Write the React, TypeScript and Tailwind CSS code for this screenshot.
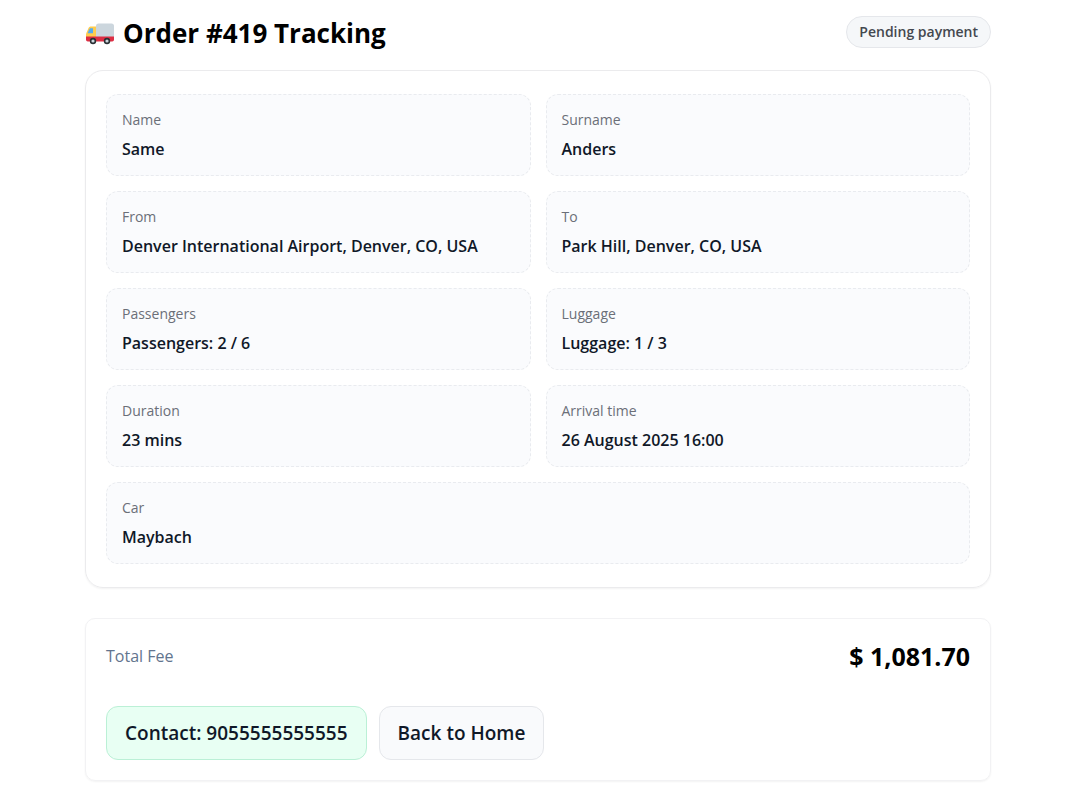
type Field = { label: string; value: string; wide?: boolean }

const FIELDS: Field[] = [
  { label: 'Name', value: 'Same' },
  { label: 'Surname', value: 'Anders' },
  { label: 'From', value: 'Denver International Airport, Denver, CO, USA' },
  { label: 'To', value: 'Park Hill, Denver, CO, USA' },
  { label: 'Passengers', value: 'Passengers: 2 / 6' },
  { label: 'Luggage', value: 'Luggage: 1 / 3' },
  { label: 'Duration', value: '23 mins' },
  { label: 'Arrival time', value: '26 August 2025 16:00' },
  { label: 'Car', value: 'Maybach', wide: true },
]

function TruckIcon() {
  return (
    <svg className="h-6 w-[29px] shrink-0" viewBox="-1 -2 29 24" aria-hidden="true">
      <path d="M12.500.5h13A2.500 2.500 0 0 1 28 3v11H10V3A2.500 2.500 0 0 1 12.500.5z" fill="#ccd6dd" />
      <path d="M10 3.500H5.200c-1.400 0-2.300.6-2.900 1.900L.3 10.200C.1 10.800 0 11.300 0 12v4h10z" fill="#ffcc4d" />
      <path d="M7 5.200H4.800c-.8 0-1.200.4-1.500 1.100L1.600 10.200H7z" fill="#55acee" />
      <path d="M0 13.500h28v3.200a1.800 1.800 0 0 1-1.800 1.800H1.800A1.800 1.800 0 0 1 0 16.700z" fill="#dd2e44" />
      <circle cx="7" cy="18" r="3.200" fill="#292f33" />
      <circle cx="7" cy="18" r="1.600" fill="#ccd6dd" />
      <circle cx="21" cy="18" r="3.200" fill="#292f33" />
      <circle cx="21" cy="18" r="1.600" fill="#ccd6dd" />
    </svg>
  )
}

function InfoItem({ label, value, wide }: Field) {
  return (
    <div
      className={
        wide
          ? 'rounded-xl border border-dashed border-[#e9ebef] bg-[#fafbfd] px-[15px] pt-[15px] pb-[14px] sm:col-span-2'
          : 'rounded-xl border border-dashed border-[#e9ebef] bg-[#fafbfd] px-[15px] pt-[15px] pb-[14px]'
      }
    >
      <dt className="text-sm leading-5 text-[#6b6f78]">{label}</dt>
      <dd className="mt-[7px] text-base leading-6 font-semibold text-gray-900">{value}</dd>
    </div>
  )
}

export default function App() {
  return (
    <main className="min-h-screen bg-white px-4 pt-4 pb-5 font-['Open_Sans','Noto_Sans',sans-serif] md:pr-5">
      <div className="mx-auto max-w-[906px]">
        <header className="mb-5 flex flex-wrap items-start justify-between gap-3">
          <h1 className="flex items-center gap-[9px] text-[26px] leading-[34px] font-bold text-black">
            <TruckIcon />
            Order #419 Tracking
          </h1>
          <span className="rounded-full border border-gray-200 bg-[#f5f7f9] px-3 py-[5px] text-sm leading-5 font-semibold text-[#44484f]">
            Pending payment
          </span>
        </header>

        <section className="rounded-[18px] border border-[#ebebed] px-5 py-[23px] shadow-xs">
          <dl className="grid grid-cols-1 gap-[15px] sm:grid-cols-2">
            {FIELDS.map((field) => (
              <InfoItem key={field.label} {...field} />
            ))}
          </dl>
        </section>

        {/* Fee and actions */}
        <section className="mt-[30px] rounded-[10px] border border-[#f2f2f4] px-5 py-5 shadow-xs">
          <div className="flex items-center justify-between">
            <span className="text-base leading-[34px] text-slate-500">Total Fee</span>
            <strong className="text-[25px] leading-[34px] font-bold text-black">$ 1,081.70</strong>
          </div>
          <div className="mt-[33px] flex flex-wrap gap-3">
            <a
              href="tel:9055555555555"
              className="rounded-xl border border-[#bbf0d6] bg-[#e8fff3] px-[18px] py-3 text-[19px] leading-7 font-semibold text-gray-900"
            >
              Contact: 9055555555555
            </a>
            <a
              href="/"
              className="rounded-xl border border-gray-200 bg-[#f9fafc] px-[18px] py-3 text-[19px] leading-7 font-semibold text-gray-900"
            >
              Back to Home
            </a>
          </div>
        </section>
      </div>
    </main>
  )
}
